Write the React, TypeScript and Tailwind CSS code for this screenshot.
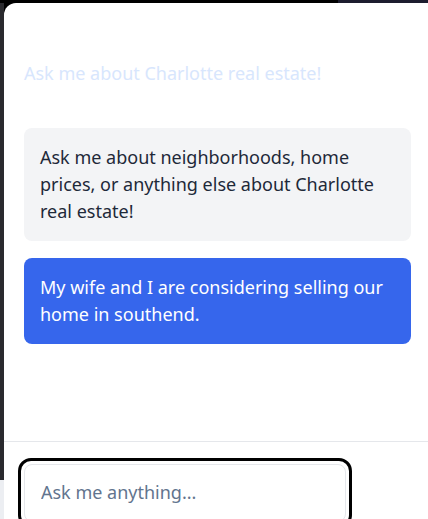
import React from "react";

const font = { fontFamily: '"Segoe UI", "Noto Sans", "Open Sans", sans-serif' };

const messages = [
  {
    from: "bot",
    text: "Ask me about neighborhoods, home prices, or anything else about Charlotte real estate!",
  },
  {
    from: "user",
    text: "My wife and I are considering selling our home in southend.",
  },
];

export default function App() {
  return (
    <div className="relative h-[519px] w-[428px] overflow-hidden bg-black" style={font}>
      {/* page behind the chat panel */}
      <div className="absolute left-0 top-0 h-[3px] w-full bg-[#1c1c2e]" />
      <div className="absolute left-0 top-0 h-[3px] w-[338px] bg-black" />
      <div className="absolute left-0 top-[3px] h-[477px] w-[4px] bg-[#2a2a2e]" />
      <div className="absolute bottom-0 left-0 h-[39px] w-[4px] bg-[#eceef2]" />

      {/* chat panel */}
      <div className="absolute left-[4px] top-[3px] flex h-[560px] w-[430px] flex-col rounded-tl-xl bg-white">
        <div className="px-5 pt-[58px]">
          <h2 className="text-[18px] font-normal leading-6 text-[#d8e6fd]">
            Ask me about Charlotte real estate!
          </h2>
        </div>

        <div className="flex h-[356px] flex-col gap-[17px] pl-5 pr-[23px] pt-[43px]">
          {messages.map((m, i) => (
            <div
              key={i}
              className={`rounded-lg px-4 py-4 text-[18px] leading-[27px] ${
                m.from === "user" ? "bg-[#3666ec] text-white" : "bg-gray-100 text-gray-800"
              }`}
            >
              {m.text}
            </div>
          ))}
        </div>

        <div className="border-t border-gray-200 pl-[14px] pt-[16px]">
          <div className="w-[334px] rounded-[13px] p-[6px] outline-[3px] outline-black outline -outline-offset-[3px]">
            <input
              className="w-full rounded-lg border border-gray-200 px-4 pb-[17px] pt-[15px] text-[18px] leading-6 text-gray-800 placeholder:text-slate-500 focus:outline-none"
              placeholder="Ask me anything..."
              style={font}
            />
          </div>
        </div>
      </div>
    </div>
  );
}
